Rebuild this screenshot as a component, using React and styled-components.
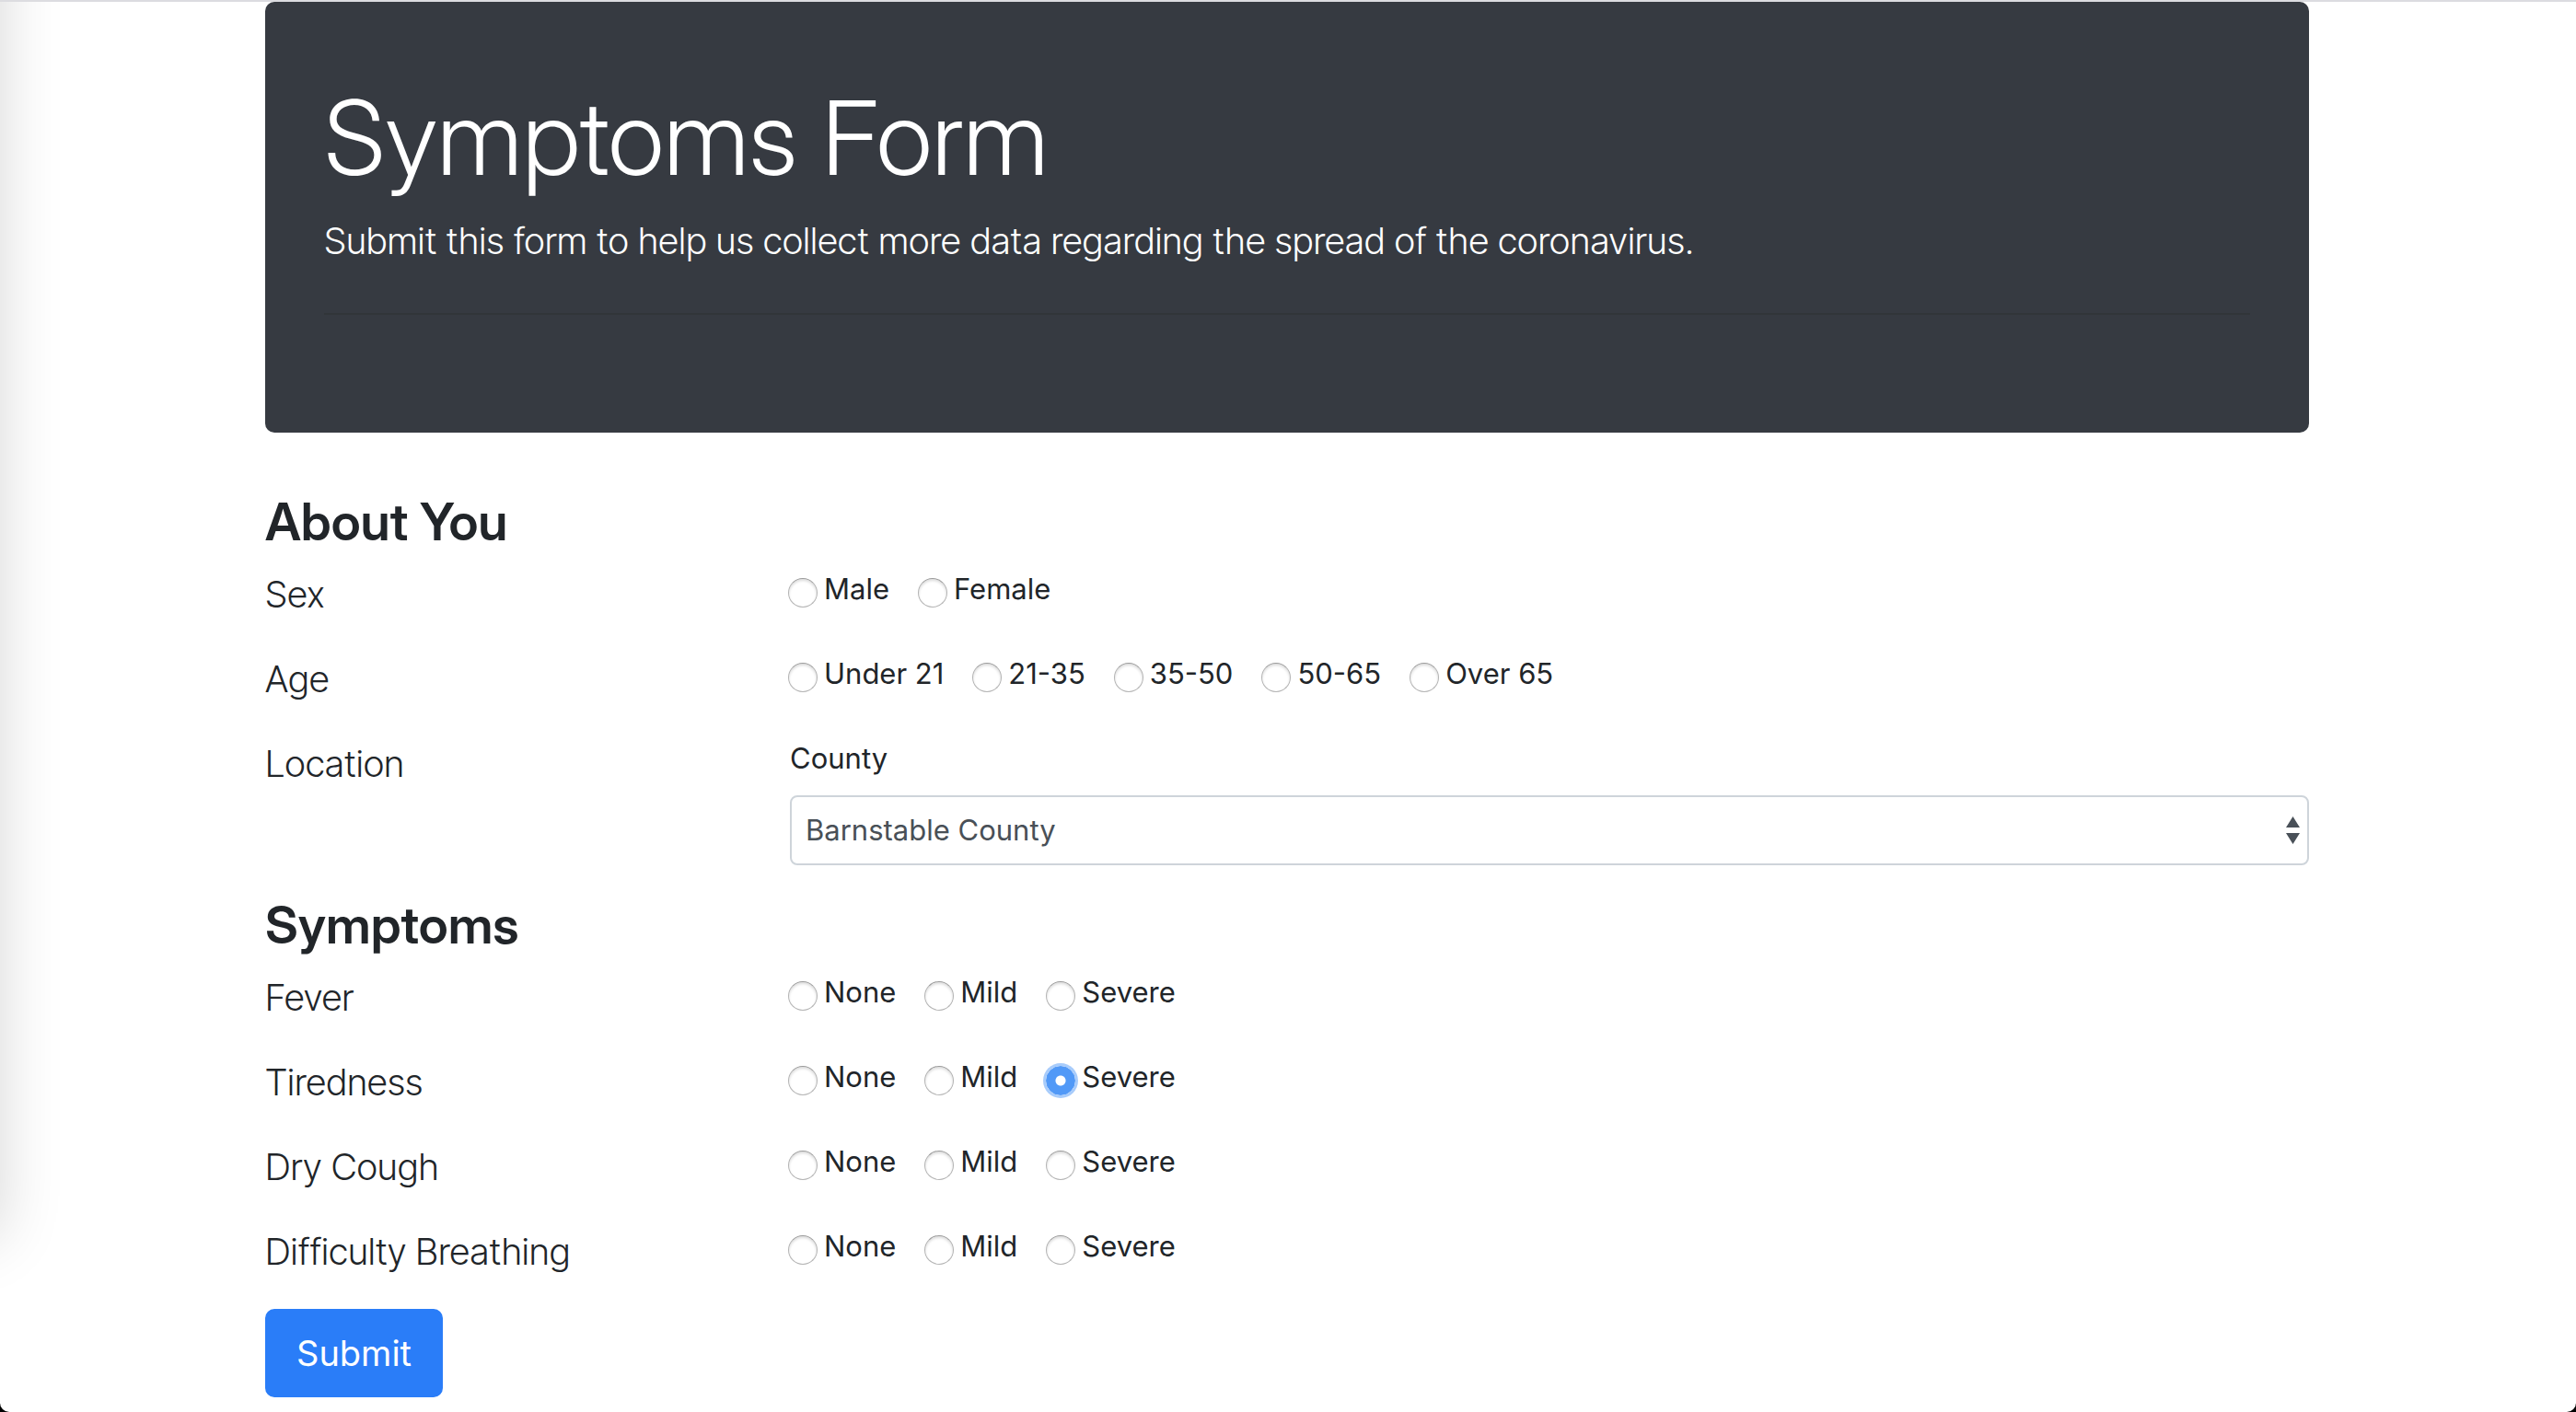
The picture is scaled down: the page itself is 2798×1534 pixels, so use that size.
import React from 'react';
import styled, { createGlobalStyle } from 'styled-components';

const GlobalStyle = createGlobalStyle`
  *, *::before, *::after { box-sizing: border-box; }
  body {
    margin: 0;
    background: #000;
    color: #212529;
    font-family: Inter, "Liberation Sans", sans-serif;
    font-size: 31px;
    line-height: 48px;
  }
`;

const Page = styled.div`
  position: relative;
  overflow: hidden;
  min-height: 100vh;
  padding: 0 32px 16px 30px;
  border-top: 2px solid #dcdce0;
  border-radius: 0 0 10px 10px;
  background: #fff;
`;

const EdgeShadow = styled.div`
  position: absolute;
  top: -100px;
  bottom: 190px;
  left: -200px;
  width: 200px;
  box-shadow: 0 0 64px rgba(0, 0, 0, 0.16);
  pointer-events: none;
`;

const Container = styled.main`
  max-width: 2220px;
  margin: 0 auto;
`;

const Banner = styled.header`
  padding: 80px 64px;
  margin-bottom: 64px;
  border-radius: 10px;
  background: #363a41;
  color: #fff;
`;

const Title = styled.h1`
  margin: 0 0 16px;
  font-family: "Inter Display", Inter, sans-serif;
  font-size: 112px;
  font-weight: 300;
  line-height: 134px;
`;

const Lead = styled.p`
  margin: 0;
  font-family: "Inter Tight", Inter, sans-serif;
  font-size: 40px;
  font-weight: 350;
  line-height: 60px;
`;

const Rule = styled.hr`
  margin: 48px 0;
  border: 0;
  border-top: 2px solid #313539;
`;

const SectionTitle = styled.h2`
  margin: 0 0 16px;
  font-family: "Inter Display", Inter, sans-serif;
  font-size: 56px;
  font-weight: 600;
  line-height: 66px;
`;

const Row = styled.div`
  display: grid;
  grid-template-columns: 510px 1fr;
  column-gap: 60px;
  min-height: 60px;
  margin-bottom: 32px;
`;

const RowLabel = styled.span`
  font-family: "Inter Tight", Inter, sans-serif;
  font-size: 40px;
  font-weight: 300;
  line-height: 60px;
`;

const Choices = styled.div`
  display: flex;
  flex-wrap: wrap;
  gap: 31px;
  margin-left: -2px;
`;

const Choice = styled.label`
  display: flex;
  gap: 7px;
`;

const Radio = styled.input`
  appearance: none;
  flex: none;
  width: 32px;
  height: 32px;
  margin: 12px 0 0;
  border: 1px solid #b4b4b4;
  border-top-color: #9a9a9a;
  border-radius: 50%;
  background: #fff;
  box-shadow: inset 0 2px 3px rgba(0, 0, 0, 0.14);

  &:checked {
    border-color: #5199f7;
    background: radial-gradient(circle, #fff 5px, #5199f7 6px);
    box-shadow: 0 0 0 3px #a8ccfb;
  }
`;

const Field = styled.div`
  display: flex;
  flex-direction: column;
  gap: 16px;
`;

const SelectBox = styled.div`
  position: relative;
  display: grid;
`;

const Select = styled.select`
  appearance: none;
  height: 76px;
  padding: 0 56px 0 15px;
  border: 2px solid #ced4da;
  border-radius: 8px;
  background: #fff;
  color: #495057;
  font: inherit;
`;

const Arrows = styled.svg`
  position: absolute;
  top: 23px;
  right: 10px;
  width: 15px;
  height: 30px;
  fill: #495058;
  pointer-events: none;
`;

const SubmitButton = styled.button`
  display: block;
  height: 96px;
  padding: 0 32px;
  border: 2px solid #2a7df8;
  border-radius: 10px;
  background: #2a7df8;
  color: #fff;
  font-family: inherit;
  font-size: 38px;
  line-height: 60px;
`;

const about = [
  { label: 'Sex', options: ['Male', 'Female'] },
  { label: 'Age', options: ['Under 21', '21-35', '35-50', '50-65', 'Over 65'] },
];

const severities = ['None', 'Mild', 'Severe'];

const symptoms = [
  { label: 'Fever', options: severities },
  { label: 'Tiredness', options: severities, selected: 'Severe' },
  { label: 'Dry Cough', options: severities },
  { label: 'Difficulty Breathing', options: severities },
];

function RadioRow({ label, options, selected }) {
  const name = label.toLowerCase().replace(/ /g, '-');
  return (
    <Row role="radiogroup" aria-labelledby={`${name}-label`}>
      <RowLabel id={`${name}-label`}>{label}</RowLabel>
      <Choices>
        {options.map((option) => (
          <Choice key={option}>
            <Radio type="radio" name={name} value={option} defaultChecked={option === selected} />
            {option}
          </Choice>
        ))}
      </Choices>
    </Row>
  );
}

export default function App() {
  return (
    <>
      <GlobalStyle />
      <Page>
        <EdgeShadow />
        <Container>
          <Banner>
            <Title>Symptoms Form</Title>
            <Lead>
              Submit this form to help us collect more data regarding the spread of the coronavirus.
            </Lead>
            <Rule />
          </Banner>
          <form onSubmit={(event) => event.preventDefault()}>
            <SectionTitle>About You</SectionTitle>
            {about.map((row) => (
              <RadioRow key={row.label} {...row} />
            ))}
            <Row>
              <RowLabel>Location</RowLabel>
              <Field>
                <label htmlFor="county">County</label>
                <SelectBox>
                  <Select id="county" defaultValue="Barnstable County">
                    <option>Barnstable County</option>
                  </Select>
                  <Arrows viewBox="0 0 15 30" aria-hidden="true">
                    <path d="M0 12 7.500 0 15 12zM0 18h15L7.500 30z" />
                  </Arrows>
                </SelectBox>
              </Field>
            </Row>
            <SectionTitle>Symptoms</SectionTitle>
            {symptoms.map((row) => (
              <RadioRow key={row.label} {...row} />
            ))}
            <SubmitButton type="submit">Submit</SubmitButton>
          </form>
        </Container>
      </Page>
    </>
  );
}
